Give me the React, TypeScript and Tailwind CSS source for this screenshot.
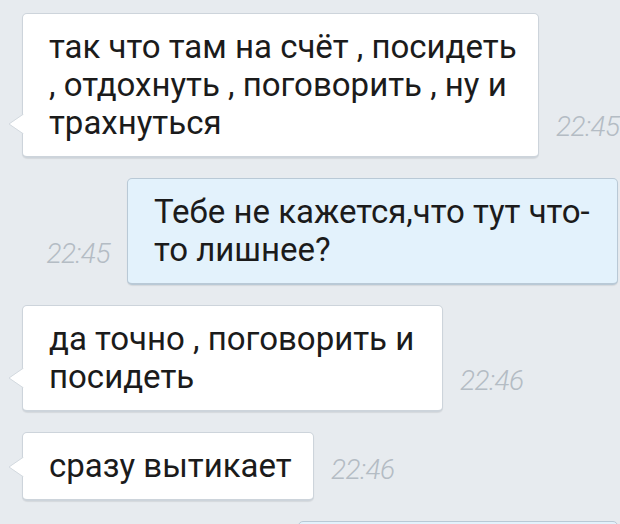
import React from "react";

type Msg = {
  text: string[];
  time: string;
  out?: boolean;
  width: string;
};

const messages: Msg[] = [
  {
    text: ["так что там на счёт , посидеть", ", отдохнуть , поговорить , ну и", "трахнуться"],
    time: "22:45",
    width: "w-[517px]",
  },
  {
    text: ["Тебе не кажется,что тут что-", "то лишнее?"],
    time: "22:45",
    out: true,
    width: "w-[491px]",
  },
  {
    text: ["да точно , поговорить и", "посидеть"],
    time: "22:46",
    width: "w-[421px]",
  },
  {
    text: ["сразу вытикает"],
    time: "22:46",
    width: "w-[292px]",
  },
];

function Time({ value }: { value: string }) {
  return (
    <span className="mb-[17px] text-[28px] leading-none italic font-light tracking-[-0.5px] text-[#b4bcc4] font-['Roboto',sans-serif]">
      {value}
    </span>
  );
}

function Bubble({ msg }: { msg: Msg }) {
  const tone = msg.out
    ? "bg-[#e3f2fc] border-[#b9c9d6]"
    : "bg-white border-[#cdd4db]";
  return (
    <div
      className={`relative ${msg.width} shrink-0 rounded-[5px] border border-b-2 px-[26px] py-[14px] ${tone} shadow-[0_1px_1px_rgba(0,0,0,0.08)]`}
    >
      {!msg.out && (
        <svg
          className="absolute left-[-15px] bottom-[22px]"
          width="16"
          height="20"
          viewBox="0 0 16 20"
        >
          <path d="M16 0 L1 10 L16 20 Z" fill="#ffffff" />
          <path d="M15.5 0 L1 10 L15.5 20" fill="none" stroke="#d3d9df" strokeWidth="1" />
        </svg>
      )}
      {msg.text.map((line, i) => (
        <div
          key={i}
          className="whitespace-nowrap text-[33px] leading-[38px] text-[#1b1b1b] font-['Roboto',sans-serif]"
        >
          {line}
        </div>
      ))}
    </div>
  );
}

export default function App() {
  return (
    <div className="h-[524px] w-[620px] overflow-hidden bg-[#e7ebef]">
      <div className="flex flex-col gap-[20px] pt-[13px]">
        {messages.map((msg, i) =>
          msg.out ? (
            <div key={i} className="flex items-end justify-end gap-[17px] pr-[2px]">
              <Time value={msg.time} />
              <Bubble msg={msg} />
            </div>
          ) : (
            <div key={i} className="flex items-end gap-[17px] pl-[22px]">
              <Bubble msg={msg} />
              <Time value={msg.time} />
            </div>
          )
        )}
        <div className="flex justify-end pr-[2px]">
          <div className="h-[40px] w-[320px] rounded-[5px] border border-[#b9c9d6] bg-[#e3f2fc]" />
        </div>
      </div>
    </div>
  );
}
